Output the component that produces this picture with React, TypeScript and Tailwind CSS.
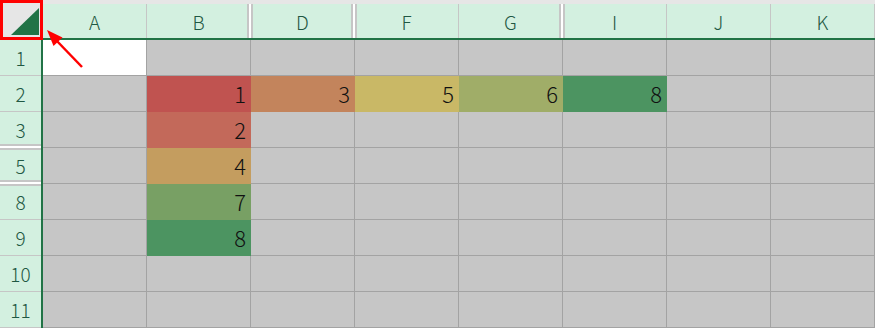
import React from "react";

const cols = ["A", "B", "D", "F", "G", "I", "J", "K"];
// columns that sit right after hidden ones
const hiddenBeforeCol = ["D", "F", "I"];
const rows = [1, 2, 3, 5, 8, 9, 10, 11];
const hiddenBeforeRow = [5, 8];

const filled: Record<string, { v: number; bg: string }> = {
  "2B": { v: 1, bg: "bg-[#c05350] border-[#c05350]" },
  "2D": { v: 3, bg: "bg-[#c3845c] border-[#c3845c]" },
  "2F": { v: 5, bg: "bg-[#c9b866] border-[#c9b866]" },
  "2G": { v: 6, bg: "bg-[#a0ad68] border-[#a0ad68]" },
  "2I": { v: 8, bg: "bg-[#4c9461] border-[#4c9461]" },
  "3B": { v: 2, bg: "bg-[#c3695a] border-[#c3695a]" },
  "5B": { v: 4, bg: "bg-[#c49d5f] border-[#c49d5f]" },
  "8B": { v: 7, bg: "bg-[#78a064] border-[#78a064]" },
  "9B": { v: 8, bg: "bg-[#4c9461] border-[#4c9461]" },
};

function Cell({ row, col }: { row: number; col: string }) {
  const f = filled[`${row}${col}`];
  const isActive = row === 1 && col === "A";
  let cls = "bg-[#c6c6c6] border-[#a3a3a3]";
  if (f) cls = f.bg;
  else if (isActive) cls = "bg-white border-[#a3a3a3]";
  return (
    <div
      className={`w-[104px] h-[36px] border-r border-b flex items-center justify-end pr-[4px] text-[22px] font-light text-[#111] ${cls}`}
    >
      {f ? f.v : null}
    </div>
  );
}

export default function App() {
  return (
    <div
      className="relative w-[875px] h-[328px] overflow-hidden bg-white"
      style={{ fontFamily: '"Noto Sans CJK JP", "Noto Sans", sans-serif' }}
    >
      {/* column headers */}
      <div className="flex h-[40px]">
        <div className="w-[41px] h-full bg-[#e6e6e6] relative">
          <svg className="absolute left-0 top-0" width="41" height="40">
            <polygon points="11,35 39,8 39,35" fill="#217346" />
          </svg>
        </div>
        <div className="flex-1 flex flex-col bg-[#e6e6e6]">
          <div className="h-[4px]" />
          <div className="h-[34px] flex pl-[2px] bg-[#d3f0e0]">
            {cols.map((c) => (
              <div
                key={c}
                className="relative w-[104px] h-full border-r border-[#c6c6c6] flex items-center justify-center pt-[2px] text-[19px] font-light text-[#1f5843]"
              >
                {hiddenBeforeCol.includes(c) && (
                  <div className="absolute left-[-4px] top-0 bottom-0 w-[6px] border-x-2 border-[#c6c6c6] bg-white" />
                )}
                {c}
              </div>
            ))}
          </div>
          <div className="h-[2px] bg-[#217346]" />
        </div>
      </div>

      {/* rows */}
      {rows.map((r) => (
        <div key={r} className="flex h-[36px]">
          <div className="relative w-[41px] h-full bg-[#d3f0e0] border-b border-[#c6c6c6] flex items-center justify-center pt-[2px] text-[19px] font-light text-[#1f5843]">
            {hiddenBeforeRow.includes(r) && (
              <div className="absolute top-[-4px] left-0 right-0 h-[6px] border-y-2 border-[#c6c6c6] bg-white" />
            )}
            {r}
          </div>
          <div className="w-[2px] h-full bg-[#217346]" />
          {cols.map((c) => (
            <Cell key={c} row={r} col={c} />
          ))}
        </div>
      ))}

      {/* red highlight box + arrow */}
      <div className="absolute left-0 top-0 w-[43px] h-[40px] border-[3px] border-[#ff0000]" />
      <svg className="absolute left-0 top-0" width="100" height="80">
        <line x1="82" y1="67" x2="55" y2="39" stroke="#ff0000" strokeWidth="2.5" />
        <polygon points="47,30 62.5,37.5 53.5,46" fill="#ff0000" />
      </svg>
    </div>
  );
}
